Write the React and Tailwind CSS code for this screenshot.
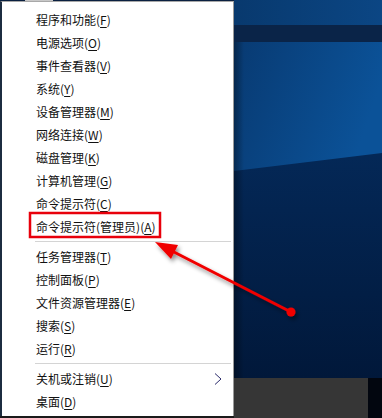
import React from 'react';

const groups = [
  [
    ['程序和功能', 'F'],
    ['电源选项', 'O'],
    ['事件查看器', 'V'],
    ['系统', 'Y'],
    ['设备管理器', 'M'],
    ['网络连接', 'W'],
    ['磁盘管理', 'K'],
    ['计算机管理', 'G'],
    ['命令提示符', 'C'],
    ['命令提示符(管理员)', 'A'],
  ],
  [
    ['任务管理器', 'T'],
    ['控制面板', 'P'],
    ['文件资源管理器', 'E'],
    ['搜索', 'S'],
    ['运行', 'R'],
  ],
  [
    ['关机或注销', 'U', true],
    ['桌面', 'D'],
  ],
];

function MenuItem({ label, hotkey, sub }) {
  return (
    <div className="flex items-center h-[23px] pl-[34px] pr-[10px] text-[12px] text-[#111] leading-none">
      <span className="flex-1 whitespace-nowrap">
        {label}(<span className="underline underline-offset-[2px]">{hotkey}</span>)
      </span>
      {sub && (
        <svg width="8" height="12" viewBox="0 0 8 12" className="mr-[1px]">
          <polyline points="1,0.5 7,6 1,11.5" fill="none" stroke="#2a2a6a" strokeWidth="1" />
        </svg>
      )}
    </div>
  );
}

function Wallpaper() {
  return (
    <svg width="148" height="336" viewBox="0 0 148 336" preserveAspectRatio="none" className="block">
      <defs>
        <linearGradient id="upper" x1="0" y1="0" x2="1" y2="0.3">
          <stop offset="0" stopColor="#083a72" />
          <stop offset="1" stopColor="#0b5298" />
        </linearGradient>
        <linearGradient id="lower" x1="0" y1="0" x2="0" y2="1">
          <stop offset="0" stopColor="#063064" />
          <stop offset="0.5" stopColor="#032450" />
          <stop offset="1" stopColor="#01183a" />
        </linearGradient>
        <linearGradient id="edge" x1="0" y1="0" x2="1" y2="0">
          <stop offset="0" stopColor="#000" stopOpacity="0.35" />
          <stop offset="1" stopColor="#000" stopOpacity="0" />
        </linearGradient>
      </defs>
      <rect x="0" y="0" width="148" height="336" fill="url(#lower)" />
      <polygon points="0,0 148,0 148,111 0,129" fill="url(#upper)" />
      <rect x="0" y="0" width="10" height="336" fill="url(#edge)" />
    </svg>
  );
}

export default function App() {
  return (
    <div className="relative w-[382px] h-[418px] overflow-hidden bg-[#02060f] font-['Noto_Sans_CJK_SC','Noto_Sans',sans-serif]">
      <div className="flex h-full">
        {/* 菜单 */}
        <div className="flex flex-col w-[234px] h-full">
          <div className="flex h-[1px] bg-[#0a2040]">
            <div className="ml-[25px] w-[28px] bg-[#c8c8c8]" />
          </div>
          <div className="flex-1 flex flex-col bg-white border-l-2 border-l-[#1c2c40] border-t border-t-[#a8a8a8] border-r border-r-[#9a9a9a] pt-[6px]">
            {groups.map((items, gi) => (
              <div key={gi}>
                {gi > 0 && (
                  <div className="py-[3px] pl-[33px] pr-[2px]">
                    <div className="h-[1px] bg-[#d4d4d4]" />
                  </div>
                )}
                {items.map(([label, key, sub]) => (
                  <MenuItem key={label} label={label} hotkey={key} sub={sub} />
                ))}
              </div>
            ))}
          </div>
          <div className="h-[2px] bg-[#1a1a1a]" />
        </div>

        {/* 桌面 */}
        <div className="flex-1 flex flex-col">
          <div className="h-[25px] bg-gradient-to-r from-[#08396e] to-[#0b4684]" />
          <div className="h-[17px] bg-[#0a2448]" />
          <div className="flex-1">
            <Wallpaper />
          </div>
          <div className="flex h-[40px]">
            <div className="w-[134px] bg-[#363636]" />
            <div className="flex-1 bg-[#02060f]" />
          </div>
        </div>
      </div>

      {/* 标注 */}
      <svg className="absolute inset-0 pointer-events-none" width="382" height="418" viewBox="0 0 382 418">
        <defs>
          <filter id="sh" x="-20%" y="-20%" width="140%" height="140%">
            <feDropShadow dx="2" dy="3" stdDeviation="2" floodColor="#000" floodOpacity="0.45" />
          </filter>
        </defs>
        <rect x="30" y="213" width="130" height="24" fill="none" stroke="#e8000b" strokeWidth="2.5" />
        <g filter="url(#sh)">
          <line x1="291" y1="312" x2="172" y2="251" stroke="#f00000" strokeWidth="3" />
          <polygon points="155,242 178,245 171,259" fill="#f00000" />
          <circle cx="291" cy="312" r="4.5" fill="#f00000" />
        </g>
      </svg>
    </div>
  );
}
